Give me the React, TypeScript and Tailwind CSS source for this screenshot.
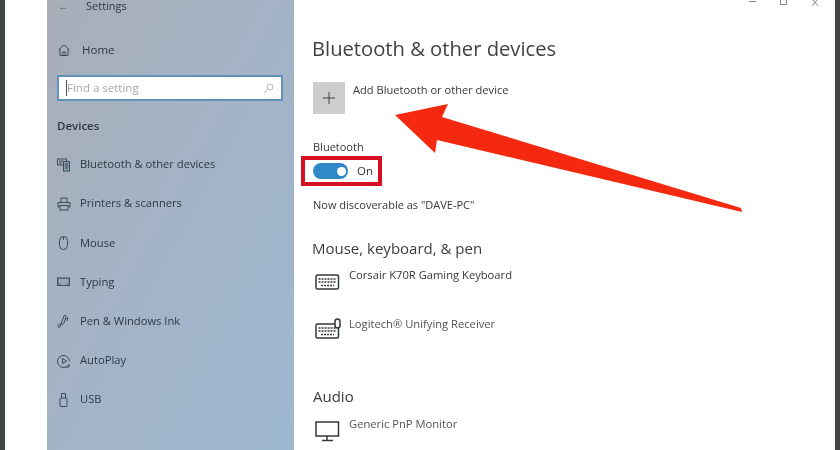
const navStroke = "#3d4a58";

function Ico({ children, className = "" }: { children: React.ReactNode; className?: string }) {
  return (
    <svg width="14" height="14" viewBox="0 0 14 14" fill="none" stroke={navStroke} strokeWidth="1" className={className}>
      {children}
    </svg>
  );
}

const items: { label: string; icon: React.ReactNode }[] = [
  {
    label: "Bluetooth & other devices",
    icon: (
      <Ico>
        <rect x="0.5" y="1" width="9" height="6" />
        <rect x="6.5" y="3.5" width="6" height="9.5" fill="#8c9cb0" />
        <path d="M2 3h4M2 5h3M8 6h3M8 8h3M8 10h3" />
      </Ico>
    ),
  },
  {
    label: "Printers & scanners",
    icon: (
      <Ico>
        <path d="M4 5V1h6v4M1 10V5.500h12V10h-2M3 10H1" />
        <rect x="3" y="8.500" width="8" height="4.500" />
      </Ico>
    ),
  },
  {
    label: "Mouse",
    icon: (
      <Ico>
        <rect x="2.500" y="0.500" width="8" height="13" rx="4" />
        <path d="M6.500 1v3" />
      </Ico>
    ),
  },
  {
    label: "Typing",
    icon: (
      <Ico>
        <rect x="0.500" y="3" width="12" height="7.500" fill="#7c8b9c" />
        <path d="M2 5h9M2 7h9M4 9h5" stroke="#b8c4d2" />
      </Ico>
    ),
  },
  {
    label: "Pen & Windows Ink",
    icon: (
      <Ico>
        <path d="M1 13c-1-2 1-3 2-3s1 2 0 3-2 0-2 0zM4 10l3-8c.5-1.500 2.500-1 2 1L7 9c-1 2-2 2-3 1zM8 5l3-1-1 3" />
      </Ico>
    ),
  },
  {
    label: "AutoPlay",
    icon: (
      <Ico>
        <path d="M11 11.500A6 6 0 1 1 12.500 7" />
        <path d="M5.500 4.500l4 2.500-4 2.500z" />
        <path d="M9 13h3v-3" />
      </Ico>
    ),
  },
  {
    label: "USB",
    icon: (
      <Ico>
        <rect x="3" y="5" width="7" height="8.500" rx="1" />
        <path d="M4.500 5V.5h4V5" />
      </Ico>
    ),
  },
];

function Keyboard({ mouse = false }: { mouse?: boolean }) {
  return (
    <svg width="26" height="22" viewBox="0 0 26 22" fill="none" stroke="#33383d" className="shrink-0">
      <rect x="1" y="6" width="22.500" height="14" rx="1.500" strokeWidth="1.500" />
      <path d="M3.500 10h18M3.500 13h18M6 16.500h13" strokeWidth="1.400" strokeDasharray="2 1" />
      {mouse && <rect x="20" y="1" width="5" height="9" rx="2.500" fill="#fff" strokeWidth="1.500" />}
    </svg>
  );
}

export default function App() {
  return (
    <div className="relative flex h-[450px] w-[840px] overflow-hidden bg-white text-[#34373b] [font-family:'Open_Sans','Liberation_Sans',sans-serif] blur-[0.45px]">
      <div className="w-[5px] shrink-0 bg-[#3f4345]" />
      <div className="w-[42px] shrink-0 bg-white" />

      <aside className="flex w-[247px] shrink-0 flex-col bg-gradient-to-br from-[#a9aeb8] via-[#a3b3c6] to-[#9eb8d2] pl-[10px] text-[#2e3945]">
        <div className="flex h-[11px] items-center gap-[17px] pl-[1px] text-[11px] leading-[11px]">
          <span className="text-[11px] leading-[11px] text-[#56606c]">←</span>
          <span>Settings</span>
        </div>
        <div className="mt-[32px] flex h-[14px] items-center gap-[12px] pl-[1px] text-[11.5px]">
          <svg width="12" height="12" viewBox="0 0 12 12" fill="none" stroke={navStroke}>
            <path d="M.5 6 6 .8 11.500 6M2 5v6.500h8V5M4.800 11.500V8h2.400v3.500" />
          </svg>
          <span>Home</span>
        </div>
        <div className="mt-[18px] flex h-[26px] w-[226px] items-center justify-between border-2 border-[#5e93bb] bg-white pl-[7px] pr-[7px] text-[11.5px] text-[#a4a7aa]">
          <span className="flex items-center">
            <span className="h-[16px] w-[1px] bg-[#555]" />
            <span>Find a setting</span>
          </span>
          <svg width="11" height="11" viewBox="0 0 11 11" fill="none" stroke="#b3b6b9">
            <circle cx="7" cy="4" r="3" />
            <path d="M4.800 6.200 1 10" />
          </svg>
        </div>
        <div className="mt-[17px] h-[16px] text-[11.5px] font-semibold leading-[16px]">Devices</div>
        <nav className="mt-[11px] flex flex-col">
          {items.map((it) => (
            <div key={it.label} className="flex h-[39.2px] items-center gap-[9px] text-[11.2px]">
              {it.icon}
              <span>{it.label}</span>
            </div>
          ))}
        </nav>
      </aside>

      <main className="relative flex min-w-0 flex-1 flex-col pl-[18px]">
        <div className="flex h-[7px] justify-end gap-[24px] pr-[16px] text-[#777]">
          <span className="mt-[1px] h-[1px] w-[7px] bg-[#888]" />
          <span className="-mt-[2px] h-[7px] w-[7px] border border-[#888]" />
          <svg width="8" height="7" viewBox="0 0 8 7" stroke="#888"><path d="M1-1 7 6M7-1 1 6" /></svg>
        </div>
        <h1 className="mt-[27px] h-[28px] text-[20.2px] font-normal leading-[28px] text-[#3f4245]">Bluetooth &amp; other devices</h1>
        <div className="mt-[20px] flex h-[32px] items-start gap-[8px] pl-[1px]">
          <div className="flex size-[32px] items-center justify-center bg-[#cdcdcd]">
            <svg width="14" height="14" viewBox="0 0 14 14" stroke="#444"><path d="M7 1v12M1 7h12" /></svg>
          </div>
          <span className="mt-[0px] text-[11.1px] leading-[15px]">Add Bluetooth or other device</span>
        </div>
        <div className="mt-[25px] h-[15px] pl-[1px] text-[11px] leading-[15px]">Bluetooth</div>
        <div className="mt-[2px] -ml-[11px] flex h-[30px] w-[81px] items-center gap-[9px] border-[4px] border-[#d80f22] pl-[8px]">
          <span className="flex h-[16px] w-[35px] items-center justify-end rounded-full bg-[#2f88c8] pr-[2px]">
            <span className="size-[9px] rounded-full bg-white" />
          </span>
          <span className="text-[11.5px]">On</span>
        </div>
        <div className="mt-[11px] h-[15px] pl-[1px] text-[11px] leading-[15px]">Now discoverable as "DAVE-PC"</div>
        <h2 className="mt-[25px] h-[22px] text-[15px] font-normal leading-[22px] text-[#3a3d40]">Mouse, keyboard, &amp; pen</h2>
        <div className="mt-[9.5px] flex h-[49.5px] items-start gap-[8px] pl-[3px]">
          <Keyboard />
          <span className="mt-[-2px] text-[11.2px] leading-[15px]">Corsair K70R Gaming Keyboard</span>
        </div>
        <div className="flex h-[49.5px] items-start gap-[8px] pl-[3px]">
          <Keyboard mouse />
          <span className="mt-[-2px] text-[11.2px] leading-[15px] text-[#505357]">Logitech® Unifying Receiver</span>
        </div>
        <h2 className="mt-[17.5px] h-[22px] pl-[1px] text-[15px] font-normal leading-[22px] text-[#3a3d40]">Audio</h2>
        <div className="mt-[10.5px] flex items-start gap-[8px] pl-[3px]">
          <svg width="26" height="24" viewBox="0 0 26 24" fill="none" stroke="#33383d" strokeWidth="1.500" className="mt-[2px] shrink-0">
            <rect x="1" y="2" width="22.500" height="14" />
            <path d="M12 16v4M7 20.500h11" />
          </svg>
          <span className="mt-[-2px] text-[11.2px] leading-[15px] text-[#505357]">Generic PnP Monitor</span>
        </div>
      </main>

      <div className="w-[5px] shrink-0 bg-[#3f4345]" />

      {/* annotation arrow overlaid on the screenshot */}
      <svg width="840" height="450" viewBox="0 0 840 450" className="pointer-events-none absolute inset-0">
        <path d="M395 115 448 104 442 117 741 208 742 212 437 140 435 153Z" fill="#f5290f" />
      </svg>
    </div>
  );
}
